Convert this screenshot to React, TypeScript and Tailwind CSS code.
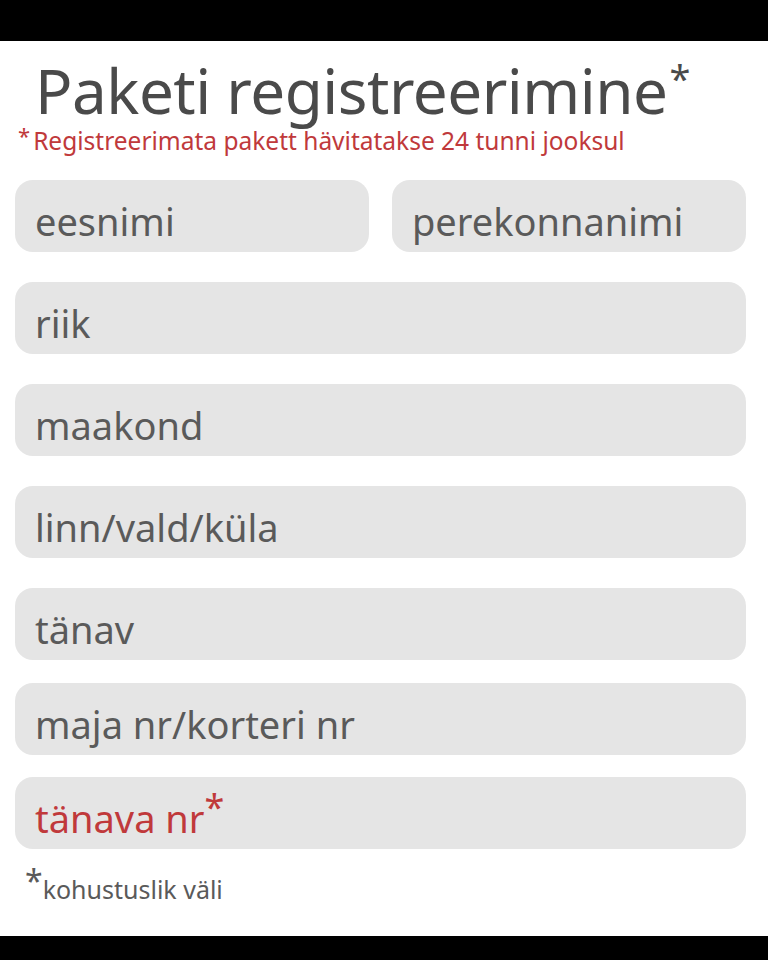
import React from "react";

const fields: { label: string; required?: boolean }[] = [
  { label: "riik" },
  { label: "maakond" },
  { label: "linn/vald/küla" },
  { label: "tänav" },
  { label: "maja nr/korteri nr" },
];

function Field({ label, className = "" }: { label: React.ReactNode; className?: string }) {
  return (
    <div
      className={`h-[72px] rounded-[18px] bg-[#e5e5e5] pl-[20px] flex items-center pt-[10px] text-[38px] text-[#5a5a5a] leading-none ${className}`}
    >
      {label}
    </div>
  );
}

export default function App() {
  return (
    <div className="w-[768px] h-[960px] bg-black flex flex-col" style={{ fontFamily: '"Noto Sans", sans-serif' }}>
      <div className="h-[41px]" />
      <div className="h-[895px] bg-white flex flex-col px-[15px] pr-[22px]">
        <h1 className="mt-[18px] pl-[20px] text-[62px] leading-[62px] text-[#4a4a4a] tracking-[-0.5px] flex items-start">
          <span>Paketi registreerimine</span>
          <span className="text-[38px] leading-none mt-[0px] ml-[2px]">*</span>
        </h1>
        <p className="mt-[5px] pl-[3px] text-[24.5px] leading-[30px] text-[#c0393b]">
          <span className="relative top-[-6px] mr-[3px] text-[22px]">*</span>Registreerimata pakett hävitatakse 24 tunni jooksul
        </p>

        <div className="mt-[24px] grid grid-cols-2 gap-[23px]">
          <Field label="eesnimi" />
          <Field label="perekonnanimi" />
        </div>

        <div className="mt-[30px] flex flex-col gap-[30px]">
          {fields.slice(0, 4).map((f) => (
            <Field key={f.label} label={f.label} />
          ))}
        </div>
        <div className="mt-[23px] flex flex-col gap-[22px]">
          <Field label={fields[4].label} />
          <Field
            className="text-[#c0393b]"
            label={
              <span className="flex items-start">
                <span>tänava nr</span>
                <span className="text-[36px] leading-none -mt-[10px]">*</span>
              </span>
            }
          />
        </div>

        <p className="mt-[14px] pl-[10px] text-[25px] text-[#5a5a5a] leading-none">
          <span className="text-[32px] relative top-[2px]">*</span>
          <span className="relative top-[8px]">kohustuslik väli</span>
        </p>
      </div>
    </div>
  );
}
